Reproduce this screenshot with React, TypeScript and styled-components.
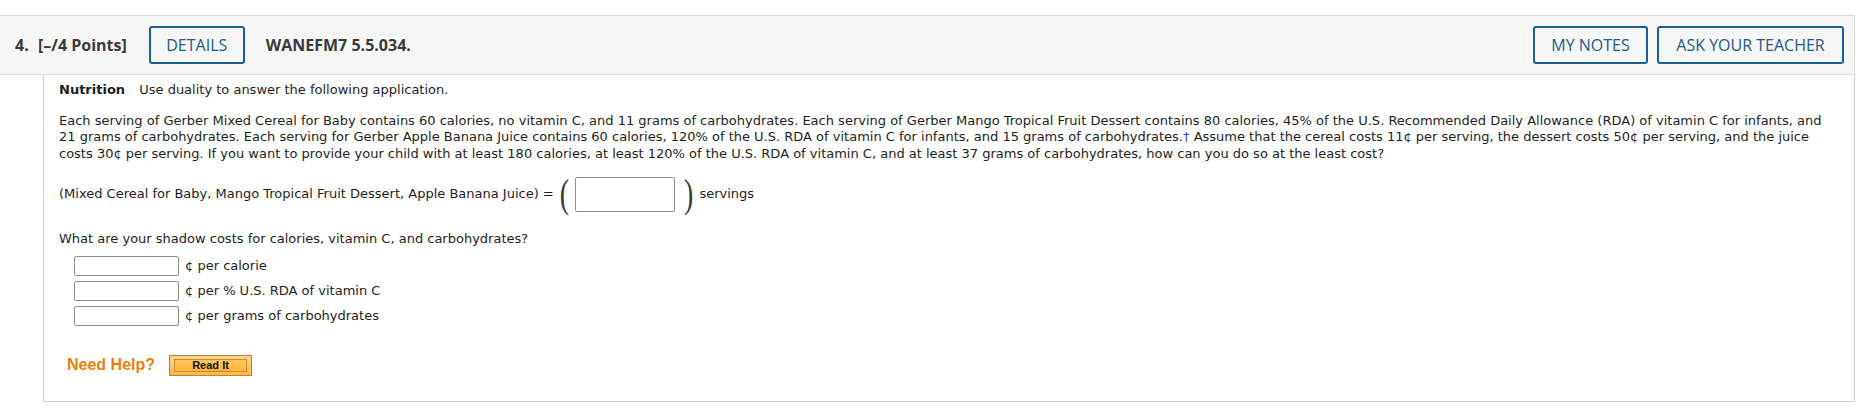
import React from "react";
import styled, { createGlobalStyle } from "styled-components";

const GlobalStyle = createGlobalStyle`
  html, body {
    margin: 0;
    padding: 0;
    background: #ffffff;
  }
  * {
    box-sizing: border-box;
  }
`;

const Page = styled.div`
  width: 1863px;
  padding: 15px 8px 0 0;
`;

const Header = styled.div`
  display: flex;
  align-items: center;
  height: 60px;
  padding: 0 10px 0 15px;
  background: #f6f6f6;
  border-top: 1px solid #dcdcdc;
  border-bottom: 1px solid #dcdcdc;
  border-right: 1px solid #dcdcdc;
  font-family: "Open Sans", sans-serif;
  font-size: 16px;
  color: #3a3a3a;
`;

const Number = styled.span`
  font-weight: 700;
  width: 23px;
`;

const Points = styled.span`
  font-weight: 700;
  margin-right: 22px;
`;

const Code = styled.span`
  font-weight: 700;
  margin-left: 21px;
`;

const Spacer = styled.div`
  flex: 1;
`;

const HeaderButton = styled.button<{ $width: number }>`
  width: ${(p) => p.$width}px;
  height: 38px;
  margin-left: ${(p) => (p.$width > 150 ? 9 : 0)}px;
  padding: 0;
  background: transparent;
  border: 2px solid #1b5f98;
  border-radius: 3px;
  font-family: "Open Sans", sans-serif;
  font-size: 16px;
  font-weight: 500;
  color: #24598a;
  cursor: pointer;
`;

const Question = styled.div`
  margin-left: 43px;
  padding: 7px 15px 25px 15px;
  border-left: 1px solid #cfcfcf;
  border-right: 1px solid #cfcfcf;
  border-bottom: 1px solid #cfcfcf;
  font-family: Verdana, "DejaVu Sans", sans-serif;
  font-size: 13px;
  line-height: 16.6px;
  color: #1e1e1e;
`;

const Lead = styled.div`
  margin-bottom: 14px;
`;

const Topic = styled.b`
  margin-right: 10px;
`;

const Paragraph = styled.p`
  margin: 0 0 12px 0;
`;

const Dagger = styled.span`
  color: #3b47f0;
`;

const MathRow = styled.div`
  display: flex;
  align-items: center;
  height: 40px;
`;

const Paren = styled.span<{ $side: "l" | "r" }>`
  display: inline-block;
  font-family: "Liberation Serif", serif;
  font-size: 28px;
  line-height: 28px;
  color: #3a3a3a;
  transform: scaleY(1.45);
  margin: ${(p) => (p.$side === "l" ? "0 6px 0 6px" : "0 6px 0 9px")};
`;

const VectorInput = styled.input`
  width: 100px;
  height: 35px;
  border: 1px solid #8f8f8f;
  border-radius: 2px;
  background: #fff;
`;

const Prompt = styled.div`
  margin-top: 17px;
  margin-bottom: 8px;
`;

const CostList = styled.div`
  display: flex;
  flex-direction: column;
  gap: 5px;
  padding-left: 15px;
`;

const CostRow = styled.label`
  display: flex;
  align-items: center;
  gap: 6px;
`;

const CostInput = styled.input`
  width: 105px;
  height: 20px;
  border: 1px solid #8f8f8f;
  border-radius: 2px;
  background: #fff;
`;

const Help = styled.div`
  display: flex;
  align-items: center;
  gap: 14px;
  margin-top: 29px;
  padding-left: 8px;
`;

const HelpText = styled.span`
  font-family: "Liberation Sans", Arial, sans-serif;
  font-weight: 700;
  font-size: 16px;
  color: #ec7f0c;
`;

const ReadButton = styled.button`
  width: 83px;
  height: 21px;
  padding: 3px 4px;
  border: 1px solid #bf8137;
  background: linear-gradient(#ffd98b, #ffb845);
  cursor: pointer;
`;

const ReadLabel = styled.span`
  display: flex;
  align-items: center;
  justify-content: center;
  height: 100%;
  border: 1px solid #c9893e;
  background: linear-gradient(#ffc95e, #ffb43c);
  font-family: "Liberation Sans", Arial, sans-serif;
  font-weight: 700;
  font-size: 11px;
  color: #111;
`;

const costs = [
  "¢ per calorie",
  "¢ per % U.S. RDA of vitamin C",
  "¢ per grams of carbohydrates",
];

export default function App() {
  return (
    <Page>
      <GlobalStyle />
      <Header>
        <Number>4.</Number>
        <Points>[–/4 Points]</Points>
        <HeaderButton $width={96}>DETAILS</HeaderButton>
        <Code>WANEFM7 5.5.034.</Code>
        <Spacer />
        <HeaderButton $width={115}>MY NOTES</HeaderButton>
        <HeaderButton $width={187}>ASK YOUR TEACHER</HeaderButton>
      </Header>
      <Question>
        <Lead>
          <Topic>Nutrition</Topic> Use duality to answer the following application.
        </Lead>
        <Paragraph>
          Each serving of Gerber Mixed Cereal for Baby contains 60 calories, no vitamin C, and 11
          grams of carbohydrates. Each serving of Gerber Mango Tropical Fruit Dessert contains 80
          calories, 45% of the U.S. Recommended Daily Allowance (RDA) of vitamin C for infants, and
          21 grams of carbohydrates. Each serving for Gerber Apple Banana Juice contains 60
          calories, 120% of the U.S. RDA of vitamin C for infants, and 15 grams of carbohydrates.
          <Dagger>†</Dagger> Assume that the cereal costs 11¢ per serving, the dessert costs 50¢ per
          serving, and the juice costs 30¢ per serving. If you want to provide your child with at
          least 180 calories, at least 120% of the U.S. RDA of vitamin C, and at least 37 grams of
          carbohydrates, how can you do so at the least cost?
        </Paragraph>
        <MathRow>
          <span>(Mixed Cereal for Baby, Mango Tropical Fruit Dessert, Apple Banana Juice) =</span>
          <Paren $side="l">(</Paren>
          <VectorInput type="text" />
          <Paren $side="r">)</Paren>
          <span>servings</span>
        </MathRow>
        <Prompt>What are your shadow costs for calories, vitamin C, and carbohydrates?</Prompt>
        <CostList>
          {costs.map((c) => (
            <CostRow key={c}>
              <CostInput type="text" />
              <span>{c}</span>
            </CostRow>
          ))}
        </CostList>
        <Help>
          <HelpText>Need Help?</HelpText>
          <ReadButton>
            <ReadLabel>Read It</ReadLabel>
          </ReadButton>
        </Help>
      </Question>
    </Page>
  );
}
